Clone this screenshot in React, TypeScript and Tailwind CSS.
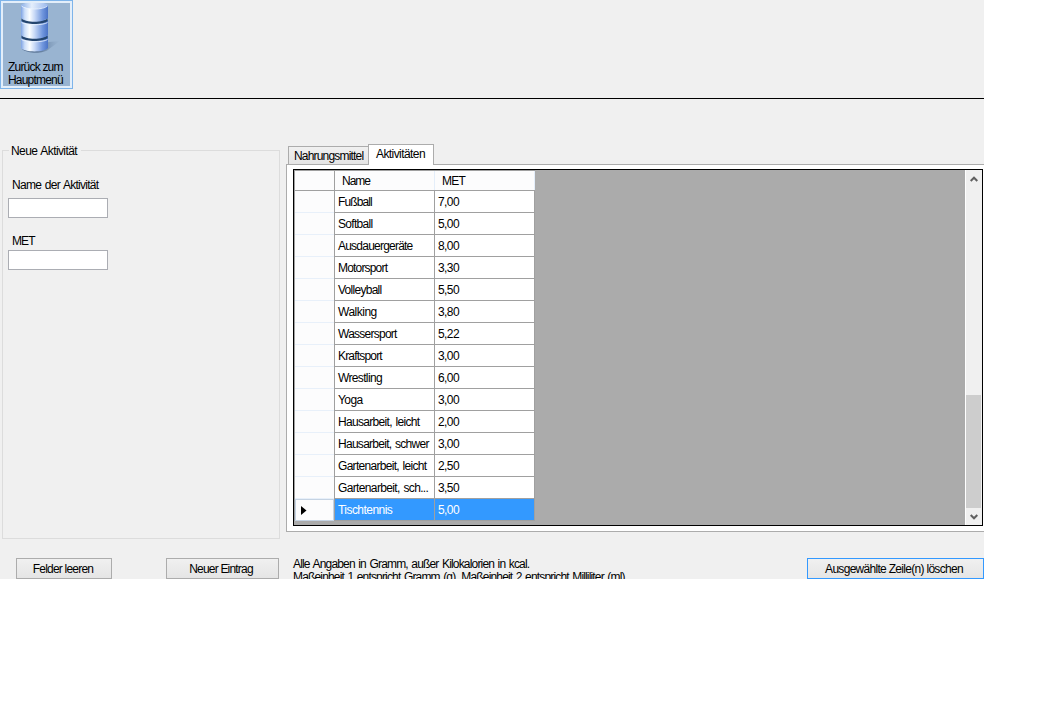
const rows: { name: string; met: string; tracking: string }[] = [
  { name: 'Fußball', met: '7,00', tracking: 'tracking-[-0.9px]' },
  { name: 'Softball', met: '5,00', tracking: 'tracking-[-0.7px]' },
  { name: 'Ausdauergeräte', met: '8,00', tracking: 'tracking-[-0.78px]' },
  { name: 'Motorsport', met: '3,30', tracking: 'tracking-[-0.82px]' },
  { name: 'Volleyball', met: '5,50', tracking: 'tracking-[-0.72px]' },
  { name: 'Walking', met: '3,80', tracking: 'tracking-[-0.5px]' },
  { name: 'Wassersport', met: '5,22', tracking: 'tracking-[-0.75px]' },
  { name: 'Kraftsport', met: '3,00', tracking: 'tracking-[-0.82px]' },
  { name: 'Wrestling', met: '6,00', tracking: 'tracking-[-0.65px]' },
  { name: 'Yoga', met: '3,00', tracking: 'tracking-[-0.55px]' },
  { name: 'Hausarbeit, leicht', met: '2,00', tracking: 'tracking-[-0.68px]' },
  { name: 'Hausarbeit, schwer', met: '3,00', tracking: 'tracking-[-0.72px]' },
  { name: 'Gartenarbeit, leicht', met: '2,50', tracking: 'tracking-[-0.7px]' },
  { name: 'Gartenarbeit, sch...', met: '3,50', tracking: 'tracking-[-0.64px]' },
  { name: 'Tischtennis', met: '5,00', tracking: 'tracking-[-0.55px]' },
];

function DatabaseIcon() {
  return (
    <svg width="66" height="52" viewBox="0 0 66 52" className="block shrink-0">
      <defs>
        <linearGradient id="body">
          <stop offset="0" stopColor="#7fa4e4" />
          <stop offset=".14" stopColor="#cddff9" />
          <stop offset=".32" stopColor="#fafdff" />
          <stop offset=".5" stopColor="#c9daf7" />
          <stop offset=".8" stopColor="#7096dd" />
          <stop offset="1" stopColor="#4a73c6" />
        </linearGradient>
        <linearGradient id="lid">
          <stop offset="0" stopColor="#8fb2e8" />
          <stop offset=".4" stopColor="#e4eefc" />
          <stop offset="1" stopColor="#9ab8ec" />
        </linearGradient>
        <linearGradient id="shade">
          <stop offset="0" stopColor="#415b7e" stopOpacity=".8" />
          <stop offset=".5" stopColor="#415b7e" stopOpacity=".6" />
          <stop offset="1" stopColor="#6d88a9" stopOpacity="0" />
        </linearGradient>
      </defs>
      <path d="M19 46c6 5 22 5 27 0l11-8-11 1z" fill="url(#shade)" />
      <path d="M18 33v12c3 4.500 24 4.500 27 0V33z" fill="url(#body)" />
      <path d="M18.500 32c3 5 23 5 26 0v3c-4 4-22 4-26 0z" fill="#25466f" />
      <path d="M18 17v15c3 4 24 4 27 0V17z" fill="url(#body)" />
      <path d="M18.500 15c3 5 23 5 26 0v3c-4 4-22 4-26 0z" fill="#25466f" />
      <path d="M18 2v13c3 4 24 4 27 0V2z" fill="url(#body)" />
      <path d="M18 2c1-1.500 4-2 6-2h15c2 0 5 .5 6 2-2 5-25 5-27 0z" fill="url(#lid)" />
      <path d="M18.500 3c4 4 22 4 26 0M18.500 19.500c4 3 22 3 26 0M18.500 36.500c4 3 22 3 26 0" fill="none" stroke="#edf5ff" strokeWidth=".8" />
    </svg>
  );
}

function Chevron({ down = false }: { down?: boolean }) {
  return (
    <svg width="8" height="6" viewBox="0 0 8 6" className="block">
      <path d={down ? 'M0.7 1l3.3 3.3L7.3 1' : 'M0.7 5L4 1.7 7.3 5'} fill="none" stroke="#606060" strokeWidth="2" />
    </svg>
  );
}

const buttonBase = 'h-[21px] shrink-0 border bg-linear-to-b from-[#f0f0f0] to-[#e5e5e5] leading-[20px] whitespace-nowrap';

export default function App() {
  return (
    <div className="h-[702px] w-[1061px] overflow-hidden bg-white font-['Liberation_Sans',Arial,sans-serif] text-[12px] leading-[13px] tracking-[-0.65px] text-black [word-spacing:1px]">
      <div className="flex h-[579px] w-[984px] flex-col overflow-hidden bg-[#f0f0f0]">
        <header className="h-[99px] shrink-0 border-b border-black">
          <button className="block h-[89px] w-[73px] border border-[#7eb4ea] bg-[#e3eefa] p-[2px] text-left">
            <span className="flex h-full flex-col bg-[#99b4d1]">
              <DatabaseIcon />
              <span className="mt-[6px] pl-[5px] leading-[13px] tracking-[-0.8px]">
                Zurück zum
                <br />
                Hauptmenü
              </span>
            </span>
          </button>
        </header>

        <div className="flex h-[440px] shrink-0 pt-[45px]">
          <section className="ml-[2px] mt-[6px] h-[389px] w-[278px] shrink-0 border border-[#dcdcdc]">
            <h2 className="ml-[6px] -mt-[6px] w-[72px] bg-[#f0f0f0] pl-[2px] tracking-[-0.6px] whitespace-nowrap">Neue Aktivität</h2>
            <label className="mt-[21px] block pl-[9px] tracking-[-0.72px]">Name der Aktivität</label>
            <input className="ml-[5px] mt-[6px] block h-[20px] w-[100px] border border-[#abadb3] bg-white" />
            <label className="mt-[17px] block pl-[9px] tracking-[-0.9px]">MET</label>
            <input className="ml-[5px] mt-[2px] block h-[20px] w-[100px] border border-[#abadb3] bg-white" />
          </section>

          <section className="ml-[6px] flex w-[698px] shrink-0 flex-col">
            <div className="z-10 -mb-px flex h-[21px] items-end pl-[2px]">
              <div className="h-[19px] w-[80px] border border-r-0 border-[#acacac] bg-linear-to-b from-[#f0f0f0] to-[#e5e5e5] pl-[5px] leading-[18px] tracking-[-0.82px] whitespace-nowrap">
                Nahrungsmittel
              </div>
              <div className="h-[21px] w-[66px] border border-b-0 border-[#acacac] bg-white pl-[7px] leading-[19px] tracking-[-0.58px]">
                Aktivitäten
              </div>
            </div>
            <div className="h-[368px] shrink-0 border-y border-l border-[#acacac] bg-white pl-[6px] pt-[4px]">
              <div className="flex h-[357px] w-[690px] border border-black bg-[#ababab]">
                <div className="h-[351px] w-[241px] border-l border-t border-[#a0a0a0]">
                  <div className="flex h-[20px] border-b border-[#a0a0a0] bg-[#fcfcfd] leading-[20px]">
                    <div className="w-[40px] border-r border-[#a0a0a0]" />
                    <div className="w-[100px] border-r border-[#e4eefa] pl-[7px] tracking-[-1px]">Name</div>
                    <div className="w-[100px] border-r border-[#e4eefa] pl-[7px] tracking-[-0.8px]">MET</div>
                  </div>
                  {rows.map((row, i) => {
                    const selected = i === rows.length - 1;
                    return (
                      <div key={row.name} className={selected ? 'flex h-[22px] leading-[22px] text-white' : 'flex h-[22px] leading-[22px]'}>
                        <div
                          className={
                            selected
                              ? 'flex w-[39px] items-center border border-[#c5d3e3] bg-[#fcfcfd] pl-[5px]'
                              : 'w-[39px] border-b border-[#e8f0fa] bg-[#fcfcfd]'
                          }
                        >
                          {selected && (
                            <svg width="6" height="9" viewBox="0 0 6 9">
                              <path d="M0 0v9l5.5-4.5z" fill="#000" />
                            </svg>
                          )}
                        </div>
                        <div
                          className={`w-[101px] border-x border-b border-[#a0a0a0] pl-[3px] whitespace-nowrap ${row.tracking} ${selected ? 'bg-[#3399ff]' : 'bg-white'}`}
                        >
                          {row.name}
                        </div>
                        <div
                          className={`w-[100px] border-r border-b border-[#a0a0a0] pl-[3px] tracking-[-0.6px] ${selected ? 'bg-[#3399ff]' : 'bg-white'}`}
                        >
                          {row.met}
                        </div>
                      </div>
                    );
                  })}
                </div>
                <div className="ml-auto flex w-[17px] flex-col items-center border-l border-white bg-[#f0f0f0]">
                  <div className="flex h-[17px] items-center">
                    <Chevron />
                  </div>
                  <div className="mt-[208px] h-[113px] w-[15px] self-start bg-[#cdcdcd]" />
                  <div className="flex h-[17px] items-center">
                    <Chevron down />
                  </div>
                </div>
              </div>
            </div>
          </section>
        </div>

        <footer className="flex h-[40px] shrink-0 items-start pt-[19px]">
          <button className={`ml-[16px] w-[96px] border-[#acacac] pr-[2px] tracking-[-0.8px] ${buttonBase}`}>Felder leeren</button>
          <button className={`ml-[54px] w-[113px] border-[#acacac] pr-[3px] tracking-[-0.8px] ${buttonBase}`}>Neuer Eintrag</button>
          <p className="ml-[14px] w-[514px] shrink-0 whitespace-nowrap">
            <span className="block tracking-[-0.83px]">Alle Angaben in Gramm, außer Kilokalorien in kcal.</span>
            <span className="block tracking-[-0.84px]">Maßeinheit 1 entspricht Gramm (g), Maßeinheit 2 entspricht Milliliter (ml)</span>
          </p>
          <button className={`w-[177px] border-[#3399ff] pr-[3px] tracking-[-0.7px] ${buttonBase}`}>Ausgewählte Zeile(n) löschen</button>
        </footer>
      </div>
    </div>
  );
}
